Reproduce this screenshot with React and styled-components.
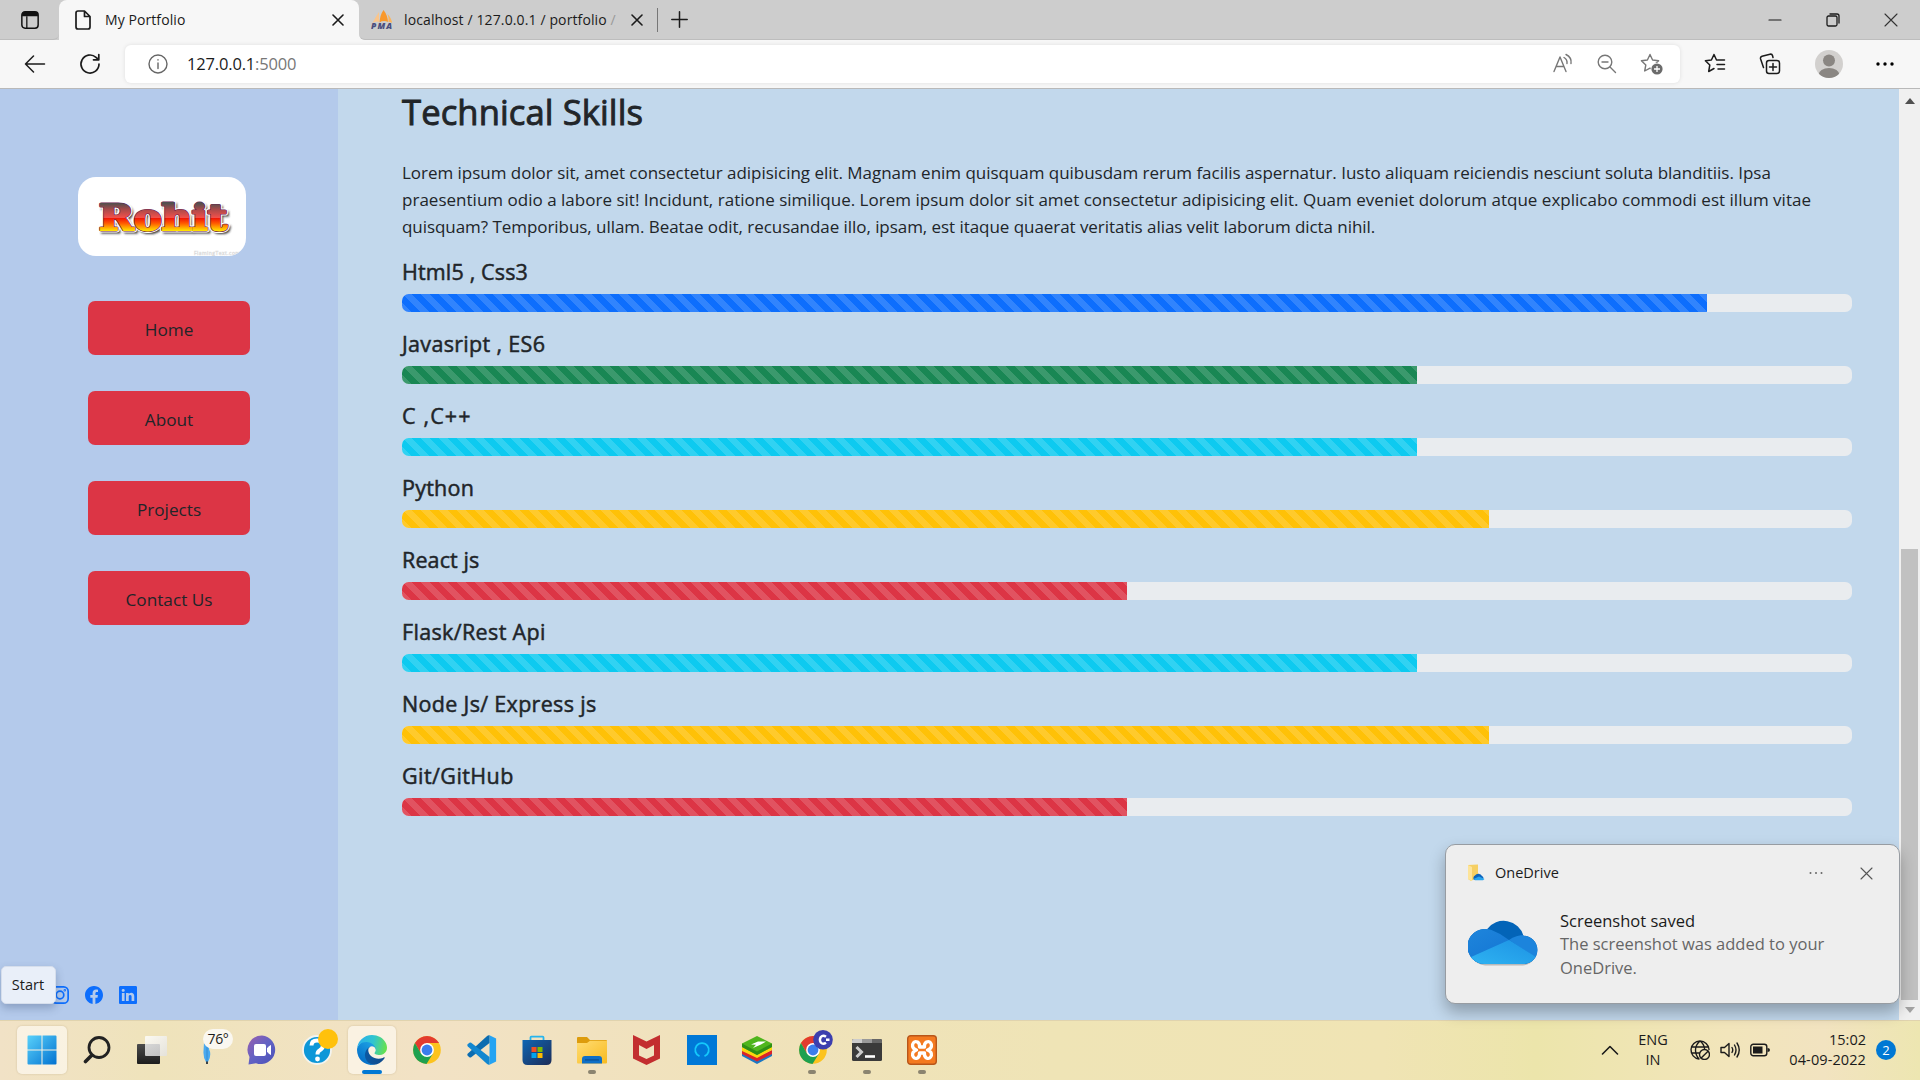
import React from "react";
import styled, { createGlobalStyle } from "styled-components";

const Global = createGlobalStyle`
  * { box-sizing: border-box; }
  body { margin: 0; width: 1920px; height: 1080px; overflow: hidden; font-family: "Open Sans", "Noto Sans", sans-serif; color: #212529; }
  svg { display: block; flex: none; }
  h2, h5, p { margin: 0; }
`;

const Screen = styled.div`
  width: 1920px; height: 1080px; display: flex; flex-direction: column; position: relative; overflow: hidden;
`;
const Text = styled.span`
  white-space: nowrap;
  font-size: ${(p) => p.$size || 15}px;
  letter-spacing: ${(p) => p.$ls || 0}px;
  color: ${(p) => p.$color || "#1b1b1b"};
`;

/* ---------- browser chrome ---------- */
const TabStrip = styled.header`
  height: 40px; flex: none; display: flex; background: #f7f7f7;
`;
const TabActions = styled.div`
  width: 59px; background: #cdcdcd; display: flex; align-items: center; padding: 1px 0 0 21px;
  border-bottom: 1px solid #bdbdbd; border-bottom-right-radius: 6px;
`;
const ActiveTab = styled.div`
  width: 300px; display: flex; align-items: center; padding: 0 15px 0 16px; background: #f7f7f7;
  border-radius: 8px 8px 0 0;
  ${Text} { flex: 1; margin: -2px 0 0 14px; }
`;
const StripBack = styled.div`
  background: #cdcdcd; display: flex;
`;
const StripRest = styled.div`
  flex: 1; background: #cdcdcd; display: flex; align-items: center; padding-left: 12px;
  border-bottom: 1px solid #bdbdbd; border-bottom-left-radius: 6px;
`;
const OtherTab = styled.div`
  width: 287px; height: 24px; display: flex; align-items: center; border-right: 1px solid #777;
  ${Text} { width: 227px; margin: -1px 0 0 11px; overflow: hidden; }
`;
const Fade = styled.span` color: #999; `;
const NewTab = styled.div` margin-left: 13px; flex: 1; `;
const WindowControls = styled.div`
  display: flex; align-items: center; gap: 44px; padding-right: 22px;
`;
const Toolbar = styled.div`
  height: 49px; flex: none; background: #f7f7f7; border-bottom: 1px solid #b9b9b9;
  display: flex; align-items: center;
`;
const NavButtons = styled.div`
  width: 125px; display: flex; align-items: center; gap: 33px; padding-left: 24px;
`;
const AddressBar = styled.div`
  width: 1555px; height: 38px; background: #fff; border-radius: 6px; box-shadow: 0 0 4px rgba(0,0,0,.1);
  display: flex; align-items: center; padding: 0 16px 0 23px;
`;
const Url = styled(Text)` flex: 1; margin: -2px 0 0 19px; `;
const AddressIcons = styled.div` display: flex; gap: 22px; `;
const BrowserIcons = styled.div`
  flex: 1; display: flex; align-items: center; justify-content: space-between; padding: 0 26px 0 24px;
`;

/* ---------- page ---------- */
const Page = styled.div` flex: 1; min-height: 0; display: flex; `;
const Sidebar = styled.aside`
  width: 338px; background: #b4caeb; display: flex; flex-direction: column; padding: 88px 0 16px;
`;
const LogoCard = styled.div`
  width: 168px; height: 79px; margin-left: 78px; background: #fff; border-radius: 18px; overflow: hidden;
`;
const Menu = styled.nav`
  margin: 45px 0 0 88px; display: flex; flex-direction: column; gap: 36px; flex: 1;
`;
const MenuButton = styled.a`
  width: 162px; height: 54px; background: #dc3545; border-radius: 7px; display: flex;
  align-items: center; justify-content: center; padding-top: 2px;
`;
const Social = styled.div`
  display: flex; gap: 16px; padding-left: 51px;
`;
const Main = styled.main`
  width: 1561px; background: #c2d8ec; padding: 1px 47.5px 0 64px;
`;
const Title = styled.h2`
  font-size: 34.6px; line-height: 43px; font-weight: 400; letter-spacing: 0.1px; margin-bottom: 26px;
  -webkit-text-stroke: 0.9px #212529;
`;
const Paragraph = styled.p` margin-bottom: 18px; `;
const Line = styled.span`
  display: block; white-space: nowrap; font-size: 17px; line-height: 27px; letter-spacing: ${(p) => p.$ls}px;
`;
const Skill = styled.section` margin-bottom: 18px; `;
const SkillName = styled.h5`
  font-size: 21.5px; line-height: 27px; font-weight: 400; margin-bottom: 9px; white-space: nowrap;
  letter-spacing: ${(p) => p.$ls || 0}px; -webkit-text-stroke: 0.5px #212529;
`;
const Track = styled.div`
  height: 18px; border-radius: 6.75px; background: #e9ecef; overflow: hidden;
`;
const Fill = styled.div`
  height: 100%; width: ${(p) => p.$value}%; background-color: ${(p) => p.$color};
  background-image: linear-gradient(45deg, rgba(255,255,255,.15) 25%, transparent 25%, transparent 50%,
    rgba(255,255,255,.15) 50%, rgba(255,255,255,.15) 75%, transparent 75%, transparent);
  background-size: 18px 18px;
`;
const Scrollbar = styled.div`
  width: 21px; background: #f0f0f0; display: flex; flex-direction: column; align-items: center;
  padding-top: 9px;
`;
const Thumb = styled.div`
  width: 17px; height: 451px; background: #c1c1c1; margin: 445px 0 7px;
`;

/* ---------- overlays ---------- */
const StartTip = styled.div`
  position: absolute; left: 1px; top: 966px; width: 55px; height: 38px; border-radius: 5px;
  background: #e9eff9; border: 1px solid #d6deec; box-shadow: 0 4px 8px rgba(40,60,100,.3);
  display: flex; align-items: center; justify-content: center; padding: 0 1px 2px 0;
`;
const Toast = styled.div`
  position: absolute; left: 1445px; top: 844px; width: 455px; height: 160px; border-radius: 10px;
  background: #eee; border: 1px solid #979ca2; box-shadow: 0 8px 16px rgba(0,0,0,.28);
  padding: 19px 26px 0 22px;
`;
const ToastHead = styled.div`
  display: flex; align-items: center; height: 18px;
  ${Text} { flex: 1; margin-left: 10px; margin-top: -2px; }
`;
const ToastActions = styled.div` display: flex; align-items: center; gap: 37px; `;
const ToastBody = styled.div` display: flex; margin-top: 27px; `;
const CloudSlot = styled.div` padding-top: 10px; `;
const ToastCopy = styled.div`
  margin-left: 22px; display: flex; flex-direction: column;
  ${Text} { line-height: 23.4px; }
`;

/* ---------- taskbar ---------- */
const Taskbar = styled.footer`
  height: 60px; flex: none; display: flex; align-items: center; justify-content: space-between;
  border-top: 1px solid #e0d3ae;
  background: linear-gradient(90deg, #f1e2c6 0, #efe3bb 8%, #f2e2c5 22%, #f0e2bb 38%, #efe4b6 55%, #f0e4b4 72%, #ece5ab 80%, #f2e5bb 90%, #f2e3c0 95%, #ede6b1 100%);
`;
const Apps = styled.div` display: flex; padding-left: 14px; height: 59px; `;
const AppSlot = styled.div`
  width: 55px; height: 58px; display: flex; justify-content: center; align-items: center; position: relative;
`;
const Tile = styled.div`
  width: ${(p) => p.$w || 48}px; height: 48px; border-radius: 5px; display: flex; align-items: center; justify-content: center;
  background: rgba(255,252,245,.62); box-shadow: 0 0 2px rgba(120,100,60,.3);
`;
const Running = styled.i`
  position: absolute; bottom: 5px; left: 50%; transform: translateX(-50%);
  width: ${(p) => (p.$active ? 20 : 8)}px; height: 4px; border-radius: 2px;
  background: ${(p) => (p.$active ? "#0078d4" : "#8b8470")};
`;
const TempPill = styled.span`
  position: absolute; left: 24px; top: 8px; width: 30px; height: 20px; border-radius: 10px; background: #faf7f0;
  display: flex; align-items: center; justify-content: center; padding-bottom: 1px;
`;
const Dot = styled.span`
  position: absolute; left: 29px; top: 8px; width: 20px; height: 20px; border-radius: 50%; background: #ffc10c;
`;
const Tray = styled.div` display: flex; align-items: center; padding: 0 24px 2px 0; `;
const Stack = styled.div`
  display: flex; flex-direction: column; align-items: ${(p) => p.$align}; width: ${(p) => p.$w}px;
  ${Text} { line-height: 20px; }
`;
const TrayIcons = styled.div` display: flex; gap: 10px; align-items: center; margin-left: 3px; margin-right: 17px; `;
const Count = styled.span`
  width: 20px; height: 20px; border-radius: 50%; background: #0078d4; margin-left: 10px;
  display: flex; align-items: center; justify-content: center;
`;

const Stroke = ({ w, h, vb, c = "#1b1b1b", sw = 1.4, children }) => (
  <svg width={w} height={h} viewBox={vb || `0 0 ${w} ${h}`} fill="none" stroke={c} strokeWidth={sw} strokeLinecap="round" strokeLinejoin="round">{children}</svg>
);
const Cross = ({ s = 12, c, sw = 1.3 }) => (
  <Stroke w={s} h={s} c={c} sw={sw}><path d={`M1 1L${s - 1} ${s - 1}M${s - 1} 1L1 ${s - 1}`} /></Stroke>
);
const star = "M10 1.5L12.6 7L18.6 7.8L14.2 12L15.3 18L10 15.1L4.7 18L5.8 12L1.4 7.8L7.4 7Z";

const Pma = () => (
  <svg width="22" height="20" viewBox="0 0 22 20">
    <path d="M8 2Q4.500 7 1.500 13Q5 10.500 8 12Z" fill="#fbc58a" />
    <path d="M12.500 0Q9 5 8.500 12.500Q12.500 10 17 12Q16.500 5 12.500 0Z" fill="#f9982b" />
    <path d="M16.500 4Q20.500 8 21 13Q19 11.500 17.500 12Q18 8 16.500 4Z" fill="#fbb45c" />
    <text x="0" y="19" fontFamily="Open Sans" fontWeight="800" fontStyle="italic" fontSize="8.500" textLength="21" fill="#4a4d7c">PMA</text>
  </svg>
);

const LogoArt = () => (
  <svg width="168" height="79" viewBox="0 0 168 79">
    <defs>
      <linearGradient id="fire" x1="0" y1="26" x2="0" y2="55" gradientUnits="userSpaceOnUse">
        <stop offset="0" stopColor="#4f4f4f" /><stop offset=".22" stopColor="#a84a4a" /><stop offset=".5" stopColor="#f0504a" />
        <stop offset=".53" stopColor="#f01808" /><stop offset=".7" stopColor="#ff5a00" /><stop offset=".95" stopColor="#ffe000" />
      </linearGradient>
      <filter id="soft"><feGaussianBlur stdDeviation="1" /></filter>
    </defs>
    <g fontFamily="'DejaVu Serif', serif" fontWeight="700" fontSize="35">
      <text x="23" y="55" textLength="128" lengthAdjust="spacingAndGlyphs" fill="#333" stroke="#333" strokeWidth="3" filter="url(#soft)">Rohit</text>
      <text x="21" y="53" textLength="128" lengthAdjust="spacingAndGlyphs" fill="#fff" stroke="#fff" strokeWidth="5" strokeLinejoin="round">Rohit</text>
      <text x="21" y="53" textLength="128" lengthAdjust="spacingAndGlyphs" fill="url(#fire)" stroke="#6b2350" strokeWidth="3" strokeLinejoin="round">Rohit</text>
      <text x="21" y="53" textLength="128" lengthAdjust="spacingAndGlyphs" fill="url(#fire)" stroke="url(#fire)" strokeWidth="1.800">Rohit</text>
    </g>
    <text x="116" y="78" fontFamily="Open Sans" fontSize="5" textLength="46" fill="#fff" stroke="#ddd" strokeWidth=".5">FlamingText.com</text>
  </svg>
);

const Instagram = () => (
  <svg width="18" height="18" viewBox="0 0 18 18" fill="none" stroke="#0d6efd" strokeWidth="1.700">
    <rect x=".85" y=".85" width="16.300" height="16.300" rx="4.500" /><circle cx="9" cy="9" r="3.800" /><circle cx="13.800" cy="4.200" r=".4" />
  </svg>
);
const Facebook = () => (
  <svg width="18" height="18" viewBox="0 0 16 16" fill="#0d6efd"><path d="M16 8.049c0-4.446-3.582-8.050-8-8.050C3.580 0-.002 3.603-.002 8.050c0 4.017 2.926 7.347 6.750 7.951v-5.625h-2.030V8.050H6.750V6.275c0-2.017 1.195-3.131 3.022-3.131.876 0 1.791.157 1.791.157v1.980h-1.009c-.993 0-1.303.621-1.303 1.258v1.510h2.218l-.354 2.326H9.250V16c3.824-.604 6.750-3.934 6.750-7.951z" /></svg>
);
const LinkedIn = () => (
  <svg width="18" height="18" viewBox="0 0 16 16" fill="#0d6efd"><path d="M0 1.146C0 .513.526 0 1.175 0h13.650C15.474 0 16 .513 16 1.146v13.708c0 .633-.526 1.146-1.175 1.146H1.175C.526 16 0 15.487 0 14.854V1.146zm4.943 12.248V6.169H2.542v7.225h2.401zm-1.200-8.212c.837 0 1.358-.554 1.358-1.248-.015-.709-.520-1.248-1.342-1.248-.822 0-1.359.540-1.359 1.248 0 .694.521 1.248 1.327 1.248h.016zm4.908 8.212V9.359c0-.216.016-.432.080-.586.173-.431.568-.878 1.232-.878.869 0 1.216.662 1.216 1.634v3.865h2.401V9.250c0-2.220-1.184-3.252-2.764-3.252-1.274 0-1.845.700-2.165 1.193v.025h-.016a5.540 5.540 0 0 1 .016-.025V6.169h-2.400c.030.678 0 7.225 0 7.225h2.400z" /></svg>
);

const Cloud = () => (
  <svg width="70" height="47" viewBox="0 0 70 47">
    <defs>
      <linearGradient id="cla" x1="0" y1="0" x2="1" y2="1"><stop offset="0" stopColor="#1f86dc" /><stop offset="1" stopColor="#0f6fd0" /></linearGradient>
      <linearGradient id="clb" x1="0" y1="1" x2="1" y2="0"><stop offset="0" stopColor="#2fb4f2" /><stop offset="1" stopColor="#1d92e4" /></linearGradient>
      <clipPath id="clc"><path d="M17 45A17 17.500 0 1 1 19 10.200A20.500 20 0 0 1 55.500 16.800A14 14 0 0 1 55 45Z" /></clipPath>
    </defs>
    <path d="M17 46.500A17 17 0 0 1 5 40L66 40A14 12 0 0 1 55 46.500Z" fill="#000" opacity=".22" />
    <g clipPath="url(#clc)">
      <rect width="70" height="46" fill="#0364b8" />
      <path d="M0 8Q22 6 41 21L70 40V46H0Z" fill="url(#cla)" />
      <path d="M41 21Q52 13 70 18V40Z" fill="#1c84dc" />
      <path d="M3 38L41 21L68 38V46H0Z" fill="url(#clb)" />
    </g>
  </svg>
);

const Folder = () => (
  <svg width="17" height="18" viewBox="0 0 17 18">
    <path d="M0 1L10 .5V13L3 17L0 15Z" fill="#f5cf63" /><path d="M0 1L4 3V17L0 15Z" fill="#fde49a" />
    <path d="M6 16A3 3 0 0 1 7 11.500A4 4 0 0 1 14 12A2.300 2.300 0 0 1 14.500 16Z" fill="#0a64bd" /><path d="M5.500 15L11 12.500L16.500 15L15 16.200H7Z" fill="#2aa5ee" />
  </svg>
);

const Windows = () => (
  <svg width="30" height="30" viewBox="0 0 30 30">
    <defs><linearGradient id="win" x1="0" y1="0" x2="30" y2="30" gradientUnits="userSpaceOnUse"><stop offset="0" stopColor="#5bd3fb" /><stop offset="1" stopColor="#0070d0" /></linearGradient></defs>
    <path d="M.5 1.500Q.5.500 1.500.500H14.500V14.500H.500ZM15.500.500H28.500Q29.500.500 29.500 1.500V14.500H15.500ZM.500 15.500H14.500V29.500H1.500Q.500 29.500.500 28.500ZM15.500 15.500H29.500V28.500Q29.500 29.500 28.500 29.500H15.500Z" fill="url(#win)" />
  </svg>
);
const Search = () => (
  <svg width="28" height="30" viewBox="0 0 28 30" fill="none" stroke="#222" strokeLinecap="round">
    <circle cx="16" cy="12.500" r="10" strokeWidth="2.800" /><path d="M8.500 20.500L2.500 26.500" strokeWidth="3.600" />
  </svg>
);
const TaskView = () => (
  <svg width="30" height="30" viewBox="0 0 30 30">
    <defs>
      <linearGradient id="tv" x1="0" y1="0" x2="0" y2="1"><stop offset="0" stopColor="#4c4c4c" /><stop offset="1" stopColor="#1d1d1d" /></linearGradient>
      <linearGradient id="tw" x1="0" y1="0" x2="1" y2="1"><stop offset="0" stopColor="#fff" /><stop offset="1" stopColor="#e2e2e2" /></linearGradient>
    </defs>
    <rect x="0" y="9" width="23" height="20" rx="1" fill="url(#tv)" /><rect x="8" y="1" width="22" height="20" rx="1" fill="url(#tw)" opacity=".8" />
  </svg>
);
const Feather = () => (
  <svg width="8" height="30" viewBox="0 0 8 30"><path d="M1 8H6V14Q9 20 5 27H3Q0 22 .5 16Z" fill="#4aa9ef" /><path d="M4 12V29" stroke="#2f86cc" strokeWidth=".8" /><path d="M4 26.500V29" stroke="#222" strokeWidth="1.600" /></svg>
);
const Chat = () => (
  <svg width="30" height="30" viewBox="0 0 30 30">
    <defs><linearGradient id="chat" x1="0" y1="0" x2="1" y2="1"><stop offset="0" stopColor="#9a5fae" /><stop offset=".5" stopColor="#6262c4" /><stop offset="1" stopColor="#4a50b8" /></linearGradient></defs>
    <path d="M15 .5A14.300 14.300 0 1 1 9 28.200L1.500 29.500L2.500 22A14.300 14.300 0 0 1 15 .5Z" fill="url(#chat)" />
    <rect x="7" y="9" width="12" height="12" rx="2" fill="#fff" /><path d="M20.500 13L23.500 10.500V19.500L20.500 17Z" fill="#fff" stroke="#fff" />
  </svg>
);
const Help = () => (
  <svg width="30" height="30" viewBox="0 0 30 30">
    <circle cx="15" cy="15" r="14" fill="#0d97d8" stroke="#f4f4ef" strokeWidth="1.800" />
    <path d="M9.500 10.500Q9.500 5.500 15 5.500Q21 5.500 21 10.500Q21 13.500 17.500 15.500Q15.500 16.500 15.500 19.500" fill="none" stroke="#fff" strokeWidth="4" /><circle cx="15.500" cy="24" r="2.400" fill="#fff" />
  </svg>
);
const Edge = () => (
  <svg width="30" height="30" viewBox="0 0 256 256">
    <defs>
      <linearGradient id="eg1" x1="63" y1="178" x2="241" y2="178" gradientUnits="userSpaceOnUse"><stop offset="0" stopColor="#0c59a4" /><stop offset="1" stopColor="#114a8b" /></linearGradient>
      <linearGradient id="eg2" x1="140" y1="90" x2="40" y2="225" gradientUnits="userSpaceOnUse"><stop offset="0" stopColor="#1b9de2" /><stop offset="1" stopColor="#0670c8" /></linearGradient>
      <linearGradient id="eg3" x1="20" y1="60" x2="245" y2="110" gradientUnits="userSpaceOnUse"><stop offset="0" stopColor="#2bb2e8" /><stop offset=".5" stopColor="#30c5cf" /><stop offset="1" stopColor="#66e050" /></linearGradient>
    </defs>
    <path fill="url(#eg1)" d="M231 190.500c-3.400 1.800-6.900 3.400-10.500 4.700a101.900 101.900 0 0 1-35.900 6.400c-47.300 0-88.500-32.500-88.500-74.300a31.500 31.500 0 0 1 16.400-27.300c-42.800 1.800-53.800 46.400-53.800 72.500 0 74 68.100 81.400 82.800 81.400 7.900 0 19.800-2.300 27-4.600l1.300-.4a128.300 128.300 0 0 0 66.600-52.800 4 4 0 0 0-5.400-5.600Z" />
    <path fill="url(#eg2)" d="M105.700 241.400a79.200 79.200 0 0 1-22.700-21.300 80.700 80.700 0 0 1 29.500-120c3.200-1.500 8.500-4.100 15.600-4a32.400 32.400 0 0 1 25.700 13 31.900 31.900 0 0 1 6.300 18.700c0-.2 24.500-79.600-80-79.600-43.900 0-80 41.700-80 78.200a130.200 130.200 0 0 0 12.100 56 128 128 0 0 0 156.400 67.100 75.500 75.500 0 0 1-62.800-8Z" />
    <path fill="url(#eg3)" d="M152.300 148.900c-.8 1-3.300 2.500-3.300 5.700 0 2.600 1.700 5.100 4.700 7.200 14.400 10 41.500 8.700 41.600 8.700a59.600 59.600 0 0 0 30.300-8.300A61.400 61.400 0 0 0 256 109.200c.3-22.400-8-37.300-11.300-43.900C223.500 23.900 177.700 0 128 0A128 128 0 0 0 0 126.200c.5-36.500 36.800-66 80-66 3.500 0 23.500.3 42 10a72.600 72.600 0 0 1 30.900 29.300c6.100 10.600 7.200 24.100 7.200 29.500s-2.700 13.300-7.800 19.900Z" />
  </svg>
);
const ChromeDisc = () => (
  <>
    <circle cx="14" cy="14" r="13.800" fill="#fcc31e" />
    <path d="M14 7H26.100A14 14 0 0 0 1.900 7L8 17.500Z" fill="#e33b2e" />
    <path d="M1.900 7A14 14 0 0 0 13.500 27.900L20 17.500L8 17.500Z" fill="#1ea050" />
    <circle cx="14" cy="14" r="6.900" fill="#fff" /><circle cx="14" cy="14" r="5.400" fill="#3b7ded" />
  </>
);
const Chrome = () => <svg width="28" height="28" viewBox="0 0 28 28"><ChromeDisc /></svg>;
const VsCode = () => (
  <svg width="30" height="30" viewBox="0 0 100 100">
    <path d="M75 1L97 12V88L75 99Z" fill="#25a3f2" />
    <path d="M3 62Q-1 66 3 70L8 74Q11 76 14 74L75 27V1Q71 0 67 3Z" fill="#0b6cb0" />
    <path d="M3 38Q-1 34 3 30L8 26Q11 24 14 26L75 73V99Q71 100 67 97Z" fill="#1287d0" />
  </svg>
);
const Store = () => (
  <svg width="30" height="30" viewBox="0 0 30 30">
    <defs><linearGradient id="store" x1="0" y1="0" x2="1" y2="1"><stop offset="0" stopColor="#0f66b4" /><stop offset="1" stopColor="#1d2c57" /></linearGradient></defs>
    <path d="M8.500 6V2.500Q8.500 1.700 9.300 1.700H20.700Q21.500 1.700 21.500 2.500V6" fill="none" stroke="#27b5ee" strokeWidth="1.800" />
    <path d="M.5 5H29.500V25Q29.500 30 24.500 30H5.500Q.5 30 .5 25Z" fill="url(#store)" />
    <rect x="9.500" y="12" width="5" height="5" fill="#f25022" /><rect x="15.500" y="12" width="5" height="5" fill="#7fba00" /><rect x="9.500" y="18" width="5" height="5" fill="#00a4ef" /><rect x="15.500" y="18" width="5" height="5" fill="#ffb900" />
  </svg>
);
const Explorer = () => (
  <svg width="30" height="30" viewBox="0 0 30 30">
    <defs><linearGradient id="fold" x1="0" y1="0" x2="1" y2="1"><stop offset="0" stopColor="#ffdc73" /><stop offset="1" stopColor="#f8bb20" /></linearGradient></defs>
    <path d="M0 3Q0 2 1 2H10L13 5H29Q30 5 30 6V10H0Z" fill="#dd9c0c" /><path d="M0 8H10L13 5.700H30V27.500Q30 28.500 29 28.500H1Q0 28.500 0 27.500Z" fill="url(#fold)" />
    <path d="M5 28.500V24Q5 21 8 21H22Q25 21 25 24V28.500Z" fill="#0f6fc6" /><rect x="8" y="24.300" width="14" height="1.200" fill="#0a4f92" />
  </svg>
);
const McAfee = () => (
  <svg width="27" height="30" viewBox="0 0 27 30"><path d="M0 0L13.500 6.500L27 0V23.500L13.500 30L0 23.500Z" fill="#c32e2f" /><path d="M6 10L13.500 14L21 10V20.500L13.500 24L6 20.500Z" fill="#f0e2bf" /></svg>
);
const Alexa = () => (
  <svg width="30" height="30" viewBox="0 0 30 30"><rect width="30" height="30" fill="#0078d7" /><path d="M12.500 21.200A6.800 6.800 0 1 1 17.500 21.200" fill="none" stroke="#14c8fb" strokeWidth="1.900" /></svg>
);
const BlueStacks = () => (
  <svg width="30" height="28" viewBox="0 0 30 28">
    <path d="M0 17L15 25L30 17V20L15 28L0 20Z" fill="#1b78c4" /><path d="M0 14L15 21L30 14V18L15 25.500L0 18Z" fill="#d9242a" />
    <path d="M0 11L15 18L30 10V14L15 22L0 15Z" fill="#fbd60e" /><path d="M0 7.500L15 0L30 7.500V11L15 19L0 11Z" fill="#4fb51c" /><path d="M0 7.500L15 15.500L30 7.500V11L15 19L0 11Z" fill="#2f8f16" />
    <path d="M9 8.500L16 5.500H24L19 8.500L11 12L14 8.800Z" fill="#fff" />
  </svg>
);
const ChromeBadged = () => (
  <svg width="42" height="40" viewBox="0 0 42 40">
    <g transform="translate(8 6)"><ChromeDisc /></g>
    <circle cx="32" cy="9.800" r="9.800" fill="#3c3fae" />
    <path d="M35 6.800Q32 4.500 29.800 7Q28 9.800 29.800 12.500Q32 15 35 12.800M35 9.800H38.500" fill="none" stroke="#fff" strokeWidth="2.400" />
  </svg>
);
const Terminal = () => (
  <svg width="30" height="22" viewBox="0 0 30 22">
    <rect width="30" height="22" rx="1.500" fill="#3a3a3a" /><path d="M0 1.500Q0 0 1.500 0H10V4H0Z" fill="#ccc" /><path d="M10 0H20V4H10Z" fill="#999" /><path d="M20 0H28.500Q30 0 30 1.500V4H20Z" fill="#666" />
    <path d="M4.500 8L9.500 13L4.500 18" fill="none" stroke="#ccc" strokeWidth="3" /><path d="M13 17.500H23" stroke="#fff" strokeWidth="2.600" />
  </svg>
);
const Xampp = () => (
  <svg width="30" height="30" viewBox="0 0 30 30">
    <rect x=".7" y=".7" width="28.600" height="28.600" rx="3" fill="#f47a20" stroke="#b8561a" strokeWidth="1.400" />
    <path d="M9.500 15Q5 13.500 5.600 9.500Q7 5.500 10.500 7Q13 8.500 12.500 12H17.500Q17 8.500 19.500 7Q23 5.500 24.400 9.500Q25 13.500 20.500 15Q25 16.500 24.400 20.500Q23 24.500 19.500 23Q17 21.500 17.500 18H12.500Q13 21.500 10.500 23Q7 24.500 5.600 20.500Q5 16.500 9.500 15Z" fill="none" stroke="#fff" strokeWidth="3.300" strokeLinejoin="round" />
  </svg>
);

const skills = [
  { name: "Html5 , Css3", value: 90, color: "#0d6efd", ls: 0.15 },
  { name: "Javasript , ES6", value: 70, color: "#198754", ls: 0.32 },
  { name: "C ,C++", value: 70, color: "#0dcaf0", ls: 1.15 },
  { name: "Python", value: 75, color: "#ffc107", ls: 0.25 },
  { name: "React js", value: 50, color: "#dc3545", ls: 0.12 },
  { name: "Flask/Rest Api", value: 70, color: "#0dcaf0", ls: 0.35 },
  { name: "Node Js/ Express js", value: 75, color: "#ffc107", ls: 0.32 },
  { name: "Git/GitHub", value: 50, color: "#dc3545", ls: 0.43 },
];
const menu = ["Home", "About", "Projects", "Contact Us"];
const lines = [
  { ls: -0.028, t: "Lorem ipsum dolor sit, amet consectetur adipisicing elit. Magnam enim quisquam quibusdam rerum facilis aspernatur. Iusto aliquam reiciendis nesciunt soluta blanditiis. Ipsa" },
  { ls: 0.014, t: "praesentium odio a labore sit! Incidunt, ratione similique. Lorem ipsum dolor sit amet consectetur adipisicing elit. Quam eveniet dolorum atque explicabo commodi est illum vitae" },
  { ls: -0.054, t: "quisquam? Temporibus, ullam. Beatae odit, recusandae illo, ipsam, est itaque quaerat veritatis alias velit laborum dicta nihil." },
];
const apps = [
  { icon: <Tile $w={50}><Windows /></Tile> },
  { icon: <Search /> },
  { icon: <TaskView /> },
  { icon: <><Feather /><TempPill><Text $size={14} $ls={-0.4}>76°</Text></TempPill></> },
  { icon: <Chat /> },
  { icon: <><Help /><Dot /></> },
  { icon: <Tile><Edge /></Tile>, active: true },
  { icon: <Chrome /> },
  { icon: <VsCode /> },
  { icon: <Store /> },
  { icon: <Explorer />, running: true },
  { icon: <McAfee /> },
  { icon: <Alexa /> },
  { icon: <BlueStacks /> },
  { icon: <ChromeBadged />, running: true },
  { icon: <Terminal />, running: true },
  { icon: <Xampp />, running: true },
];

export default function App() {
  return (
    <Screen>
      <Global />
      <TabStrip>
        <StripBack>
          <TabActions>
            <svg width="18" height="18" viewBox="0 0 17 17"><rect x=".8" y=".8" width="15.400" height="15.400" rx="3" fill="none" stroke="#111" strokeWidth="1.400" /><path d="M1 5V3Q1 1 3 1H14Q16 1 16 3V5Z" fill="#111" /><path d="M5.500 5V16" stroke="#111" strokeWidth="1.200" /></svg>
          </TabActions>
          <ActiveTab>
            <Stroke w={16} h={20} sw={1.7}><path d="M3 1H9.500L15 6.500V17Q15 19 13 19H3Q1 19 1 17V3Q1 1 3 1ZM9.500 1V6.500H15" /></Stroke>
            <Text $size={14} $ls={0.08}>My Portfolio</Text>
            <Cross sw={1.6} />
          </ActiveTab>
        </StripBack>
        <StripRest>
          <OtherTab><Pma /><Text $size={14} $ls={0.12}>localhost / 127.0.0.1 / portfolio <Fade>/</Fade></Text><Cross sw={1.6} /></OtherTab>
          <NewTab><Stroke w={17} h={17} sw={1.5}><path d="M8.500 .8V16.200M.8 8.500H16.200" /></Stroke></NewTab>
          <WindowControls>
            <Stroke w={14} h={14} sw={1.2}><path d="M1 7H13" /></Stroke>
            <Stroke w={14} h={14} sw={1.3}><rect x="1" y="3" width="10" height="10" rx="1.500" /><path d="M4 1H11Q13 1 13 3V10" /></Stroke>
            <Cross s={14} sw={1.1} c="#333" />
          </WindowControls>
        </StripRest>
      </TabStrip>
      <Toolbar>
        <NavButtons>
          <Stroke w={22} h={18} sw={1.5}><path d="M1.500 9H20.500M9.500 1L1.500 9L9.500 17" /></Stroke>
          <Stroke w={22} h={22} sw={1.7}><path d="M20 11A9 9 0 1 1 17 4.300L19.500 6.500M19.800 1.500V6.800H14.500" /></Stroke>
        </NavButtons>
        <AddressBar>
          <Stroke w={20} h={20} c="#666" sw={1.4}><circle cx="10" cy="10" r="9" /><path d="M10 9V14.500M10 5.800V6" /></Stroke>
          <Url $size={16.500} $ls={-0.17}>127.0.0.1<Text as="span" $size={16.500} $ls={-0.17} $color="#777">:5000</Text></Url>
          <AddressIcons>
            <Stroke w={22} h={22} c="#777"><path d="M2 18.500L8 4L14 18.500M4.200 13.500H11.800M12 4.500Q15.500 6.500 15 10.500M14 1.500Q20 4.500 19 10.500" /></Stroke>
            <Stroke w={22} h={22} c="#777"><circle cx="9" cy="9" r="6.800" /><path d="M14 14L19.500 19.500M6 9H12" /></Stroke>
            <svg width="24" height="22" viewBox="0 0 24 22"><path d={star} fill="none" stroke="#777" strokeWidth="1.400" strokeLinejoin="round" /><circle cx="17" cy="16" r="6.300" fill="#fff" /><circle cx="17" cy="16" r="5.600" fill="#6b6b6b" /><path d="M17 13V19M14 16H20" stroke="#fff" strokeWidth="1.300" /></svg>
          </AddressIcons>
        </AddressBar>
        <BrowserIcons>
          <Stroke w={22} h={22} sw={1.5}><path d="M12.500 7L10 1.500L7.400 7L1.400 7.800L5.800 12L4.700 18.500L10 15.500M13.500 7H20.500M13 11.500H20.500M14 16H20.500" /></Stroke>
          <Stroke w={22} h={22} sw={1.5}><rect x="7.500" y="7.500" width="13" height="13" rx="2.500" /><path d="M14 10.500V17.500M10.500 14H17.500M4.500 14.500L1.600 6Q1 4 3 3.200L11 1.200Q13 .8 13.500 2.500L14 4.500" /></Stroke>
          <svg width="28" height="28" viewBox="0 0 28 28"><defs><clipPath id="av"><circle cx="14" cy="14" r="14" /></clipPath></defs><circle cx="14" cy="14" r="14" fill="#d2d0ce" /><g clipPath="url(#av)" fill="#8a8682"><circle cx="14" cy="10.500" r="6" /><ellipse cx="14" cy="25" rx="10.500" ry="7" /></g></svg>
          <svg width="18" height="6" viewBox="0 0 18 6"><circle cx="2" cy="3" r="1.700" /><circle cx="9" cy="3" r="1.700" /><circle cx="16" cy="3" r="1.700" /></svg>
        </BrowserIcons>
      </Toolbar>
      <Page>
        <Sidebar>
          <LogoCard><LogoArt /></LogoCard>
          <Menu>{menu.map((m) => <MenuButton key={m}><Text $size={17.200} $color="#212529">{m}</Text></MenuButton>)}</Menu>
          <Social><Instagram /><Facebook /><LinkedIn /></Social>
        </Sidebar>
        <Main>
          <Title>Technical Skills</Title>
          <Paragraph>{lines.map((l) => <Line key={l.t} $ls={l.ls}>{l.t}</Line>)}</Paragraph>
          {skills.map((s) => (
            <Skill key={s.name}>
              <SkillName $ls={s.ls}>{s.name}</SkillName>
              <Track><Fill $value={s.value} $color={s.color} /></Track>
            </Skill>
          ))}
        </Main>
        <Scrollbar>
          <svg width="10" height="6" viewBox="0 0 10 6"><path d="M0 6L5 0L10 6Z" fill="#505050" /></svg>
          <Thumb />
          <svg width="10" height="6" viewBox="0 0 10 6"><path d="M0 0L5 6L10 0Z" fill="#a3a3a3" /></svg>
        </Scrollbar>
      </Page>
      <Taskbar>
        <Apps>
          {apps.map((a, i) => (
            <AppSlot key={i}>{a.icon}{(a.active || a.running) && <Running $active={a.active} />}</AppSlot>
          ))}
        </Apps>
        <Tray>
          <Stroke w={18} h={10} sw={1.6}><path d="M1.500 9L9 1.500L16.500 9" /></Stroke>
          <Stack $w={68} $align="center"><Text $size={14.500}>ENG</Text><Text $size={14.500}>IN</Text></Stack>
          <TrayIcons>
            <Stroke w={20} h={20}><path d="M9 19A9 9 0 1 1 19 9.500M1.500 7H18.500M1.500 13H9M9 19Q5.500 15 5.500 10Q5.500 5 10 1Q14 4 14.500 8.500" /><circle cx="14.500" cy="14.500" r="5" /><path d="M11.200 18L18 11.200" /></Stroke>
            <Stroke w={20} h={20}><path d="M1 7.500H4.500L9 3.500V16.500L4.500 12.500H1ZM12 7.500Q13.500 10 12 12.500M14.500 5Q17.500 10 14.500 15M17 3Q21.500 10 17 17" /></Stroke>
            <svg width="20" height="14" viewBox="0 0 20 14"><rect x=".8" y="1.300" width="16" height="11.400" rx="2.500" fill="none" stroke="#1b1b1b" strokeWidth="1.400" /><rect x="3" y="3.500" width="9.500" height="7" fill="#1b1b1b" /><path d="M17.500 5Q20 5 20 7Q20 9 17.500 9Z" fill="#1b1b1b" /></svg>
          </TrayIcons>
          <Stack $w={79} $align="flex-end"><Text $size={14.500}>15:02</Text><Text $size={14.500} $ls={0.1}>04-09-2022</Text></Stack>
          <Count><Text $size={13} $color="#fff">2</Text></Count>
        </Tray>
      </Taskbar>
      <StartTip><Text $size={14.500}>Start</Text></StartTip>
      <Toast>
        <ToastHead>
          <Folder />
          <Text $size={14.500}>OneDrive</Text>
          <ToastActions>
            <svg width="14" height="4" viewBox="0 0 14 4" fill="#666"><circle cx="1.500" cy="2" r="1" /><circle cx="7" cy="2" r="1" /><circle cx="12.500" cy="2" r="1" /></svg>
            <Cross s={13} sw={1.1} c="#555" />
          </ToastActions>
        </ToastHead>
        <ToastBody>
          <CloudSlot><Cloud /></CloudSlot>
          <ToastCopy>
            <Text $size={16.500}>Screenshot saved</Text>
            <Text $size={16.500} $color="#666">The screenshot was added to your</Text>
            <Text $size={16.500} $color="#666">OneDrive.</Text>
          </ToastCopy>
        </ToastBody>
      </Toast>
    </Screen>
  );
}
